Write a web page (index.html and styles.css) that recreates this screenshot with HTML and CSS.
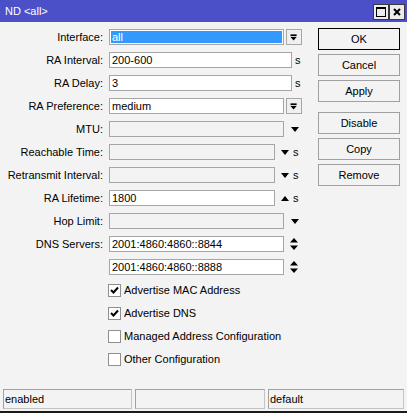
FILE: index.html
```html
<!DOCTYPE html>
<html>
<head>
<meta charset="utf-8">
<link rel="stylesheet" href="styles.css">
</head>
<body>
<div class="window">
  <div class="titlebar">
    <span class="title">ND &lt;all&gt;</span>
    <div class="tbtns">
      <span class="tbtn"><svg width="10" height="10" viewBox="0 0 10 10"><rect x="0.5" y="0.5" width="9" height="9" fill="none" stroke="#000"/><rect x="0" y="0" width="10" height="2" fill="#000"/></svg></span>
      <span class="tbtn"><svg width="8" height="8" viewBox="0 0 8 8"><path d="M1 1L7 7M7 1L1 7" stroke="#000" stroke-width="2"/></svg></span>
    </div>
  </div>
  <div class="content">
    <div class="form">
      <div class="row">
        <span class="label">Interface:</span>
        <span class="field w175 sel"><span class="hl">all</span></span>
        <span class="ddbtn"><svg width="16" height="14" viewBox="0 0 16 14"><rect x="4" y="4" width="7" height="2" fill="#000"/><path d="M4 7H11L7.5 11Z" fill="#000"/></svg></span>
      </div>
      <div class="row">
        <span class="label">RA Interval:</span>
        <span class="field w183">200-600</span>
        <span class="unit u2">s</span>
      </div>
      <div class="row">
        <span class="label">RA Delay:</span>
        <span class="field w183">3</span>
        <span class="unit u2">s</span>
      </div>
      <div class="row">
        <span class="label">RA Preference:</span>
        <span class="field w175">medium</span>
        <span class="ddbtn"><svg width="16" height="14" viewBox="0 0 16 14"><rect x="4" y="4" width="7" height="2" fill="#000"/><path d="M4 7H11L7.5 11Z" fill="#000"/></svg></span>
      </div>
      <div class="row">
        <span class="label">MTU:</span>
        <span class="field w175 off"></span>
        <svg class="arr a7" width="8" height="5" viewBox="0 0 8 5"><path d="M0 0H8L4 5Z" fill="#000"/></svg>
      </div>
      <div class="row">
        <span class="label">Reachable Time:</span>
        <span class="field w166 off"></span>
        <svg class="arr a6" width="8" height="5" viewBox="0 0 8 5"><path d="M0 0H8L4 5Z" fill="#000"/></svg>
        <span class="unit u4">s</span>
      </div>
      <div class="row">
        <span class="label">Retransmit Interval:</span>
        <span class="field w166 off"></span>
        <svg class="arr a6" width="8" height="5" viewBox="0 0 8 5"><path d="M0 0H8L4 5Z" fill="#000"/></svg>
        <span class="unit u4">s</span>
      </div>
      <div class="row">
        <span class="label">RA Lifetime:</span>
        <span class="field w166">1800</span>
        <svg class="arr a6" width="8" height="5" viewBox="0 0 8 5"><path d="M4 0L8 5H0Z" fill="#000"/></svg>
        <span class="unit u4">s</span>
      </div>
      <div class="row">
        <span class="label">Hop Limit:</span>
        <span class="field w175 off"></span>
        <svg class="arr a7" width="8" height="5" viewBox="0 0 8 5"><path d="M0 0H8L4 5Z" fill="#000"/></svg>
      </div>
      <div class="row">
        <span class="label">DNS Servers:</span>
        <span class="field w175">2001:4860:4860::8844</span>
        <svg class="arr a6" width="8" height="12" viewBox="0 0 8 12"><path d="M4 0L8 4.5H0Z M0 7.5H8L4 12Z" fill="#000"/></svg>
      </div>
      <div class="row">
        <span class="label"></span>
        <span class="field w175">2001:4860:4860::8888</span>
        <svg class="arr a6" width="8" height="12" viewBox="0 0 8 12"><path d="M4 0L8 4.5H0Z M0 7.5H8L4 12Z" fill="#000"/></svg>
      </div>
      <div class="row check">
        <span class="cbox"><svg width="11" height="11" viewBox="0 0 11 11"><path d="M2 5L4.5 7.5L9 2.5" fill="none" stroke="#000" stroke-width="2"/></svg></span>
        <span class="ctext">Advertise MAC Address</span>
      </div>
      <div class="row check">
        <span class="cbox"><svg width="11" height="11" viewBox="0 0 11 11"><path d="M2 5L4.5 7.5L9 2.5" fill="none" stroke="#000" stroke-width="2"/></svg></span>
        <span class="ctext">Advertise DNS</span>
      </div>
      <div class="row check">
        <span class="cbox"></span>
        <span class="ctext">Managed Address Configuration</span>
      </div>
      <div class="row check">
        <span class="cbox"></span>
        <span class="ctext">Other Configuration</span>
      </div>
    </div>
    <div class="actions">
      <span class="btn default">OK</span>
      <span class="btn">Cancel</span>
      <span class="btn">Apply</span>
      <span class="btn group">Disable</span>
      <span class="btn">Copy</span>
      <span class="btn">Remove</span>
    </div>
  </div>
  <div class="statusbar">
    <span class="panel">enabled</span>
    <span class="panel"></span>
    <span class="panel">default</span>
  </div>
</div>
</body>
</html>
```

FILE: styles.css
```css
html, body {
  margin: 0;
  padding: 0;
  background: #f3f3f3;
}
body {
  font-family: "Liberation Sans", Arial, sans-serif;
  font-size: 11px;
  color: #000;
}
.window {
  width: 407px;
  height: 413px;
  display: flex;
  flex-direction: column;
  box-sizing: border-box;
  border-bottom: 2px solid #1a1a1a;
  overflow: hidden;
}
.titlebar {
  height: 22px;
  flex: none;
  background: #4b50c8;
  display: flex;
  align-items: center;
  justify-content: space-between;
  padding: 0 2px 0 5px;
}
.title {
  color: #fff;
  font-size: 11px;
}
.tbtns {
  display: flex;
  gap: 0;
  margin-top: 1px;
}
.tbtn {
  width: 14px;
  height: 14px;
  border: 1px solid #3a3a3a;
  background: #ececec;
  display: flex;
  align-items: center;
  justify-content: center;
}
.content {
  flex: 1;
  display: flex;
}
.form {
  width: 318px;
  padding-top: 7px;
  display: flex;
  flex-direction: column;
  gap: 7px;
}
.row {
  height: 16px;
  display: flex;
  align-items: center;
}
.label {
  width: 103px;
  margin-right: 6px;
  text-align: right;
  white-space: nowrap;
  line-height: 16px;
}
.field {
  box-sizing: border-box;
  height: 16px;
  border: 1px solid #a6a6a6;
  background: #fff;
  padding: 0 2px;
  line-height: 14px;
  white-space: nowrap;
  overflow: hidden;
}
.field.off {
  background: #f3f3f3;
}
.field.sel {
  padding: 1px;
}
.hl {
  display: block;
  height: 12px;
  line-height: 12px;
  background: #3399ff;
  color: #fff;
  padding-left: 1px;
}
.w175 { width: 175px; }
.w183 { width: 183px; }
.w166 { width: 166px; }
.ddbtn {
  box-sizing: border-box;
  width: 16px;
  height: 16px;
  margin-left: 2px;
  border: 1px solid #a6a6a6;
  background: #f0f0f0;
  display: flex;
}
.unit {
  line-height: 16px;
}
.u2 { margin-left: 3px; }
.u4 { margin-left: 4px; }
.arr { flex: none; }
.a7 { margin-left: 7px; }
.a6 { margin-left: 6px; }
.check {
  padding-left: 108px;
}
.cbox {
  box-sizing: border-box;
  width: 13px;
  height: 13px;
  border: 1px solid #8f8f8f;
  background: #fff;
  display: flex;
}
.ctext {
  margin-left: 3px;
  line-height: 16px;
}
.actions {
  width: 82px;
  padding-top: 6px;
  display: flex;
  flex-direction: column;
}
.btn {
  box-sizing: border-box;
  height: 22px;
  border: 1px solid #a0a0a0;
  background: #f3f3f3;
  display: flex;
  align-items: center;
  justify-content: center;
}
.btn + .btn {
  margin-top: 4px;
}
.btn.group {
  margin-top: 10px;
}
.btn.default {
  border-color: #000;
}
.statusbar {
  flex: none;
  display: grid;
  grid-template-columns: 129px 130px 1fr;
  gap: 3px;
  padding: 0 3px 2px 3px;
}
.panel {
  box-sizing: border-box;
  height: 20px;
  border: 1px solid #c4c4c4;
  border-top-color: #a0a0a0;
  border-left-color: #a0a0a0;
  padding-left: 1px;
  line-height: 18px;
}
```
